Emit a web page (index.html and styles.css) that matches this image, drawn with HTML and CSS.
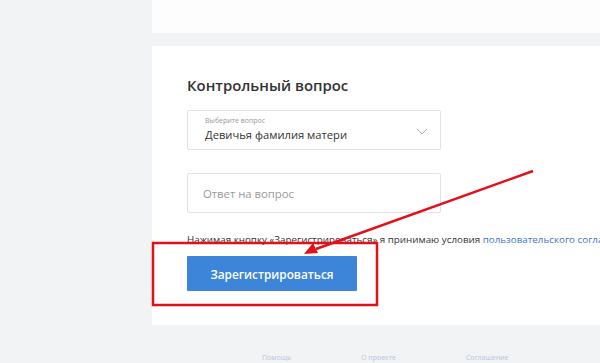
FILE: index.html
```html
<!DOCTYPE html>
<html lang="ru">
<head>
  <meta charset="UTF-8">
  <meta name="viewport" content="width=device-width, initial-scale=1.0">
  <title>Регистрация</title>
  <link rel="stylesheet" href="styles.css">
</head>
<body>
  <div class="page">
    <div class="card card-top"></div>

    <div class="card card-form">
      <h2 class="section-title">Контрольный вопрос</h2>

      <div class="field select-field">
        <span class="field-label">Выберите вопрос</span>
        <span class="field-value">Девичья фамилия матери</span>
        <svg class="chevron" width="12" height="7" viewBox="0 0 12 7">
          <path d="M1 1 L6 6 L11 1" fill="none" stroke="#b5b5b5" stroke-width="1"/>
        </svg>
      </div>

      <div class="field input-field">
        <span class="placeholder">Ответ на вопрос</span>
      </div>

      <p class="agreement">Нажимая кнопку «Зарегистрироваться» я принимаю условия <a href="#">пользовательского соглашения</a></p>

      <button class="btn-primary">Зарегистрироваться</button>
    </div>

    <div class="footer">
      <a href="#">Помощь</a>
      <a href="#">О проекте</a>
      <a href="#">Соглашение</a>
    </div>

    <!-- annotation drawn over the screenshot -->
    <svg class="annotation" width="600" height="363" viewBox="0 0 600 363">
      <rect x="153" y="243" width="224" height="62" fill="none" stroke="#e3101a" stroke-width="2.5"/>
      <line x1="533" y1="171" x2="316" y2="249" stroke="#e3101a" stroke-width="2.5"/>
      <path d="M304 254 L313 243 L318 253 Z" fill="#e3101a"/>
    </svg>
  </div>
</body>
</html>
```

FILE: styles.css
```css
html, body {
  margin: 0;
  padding: 0;
}
body {
  font-family: "Open Sans", Arial, sans-serif;
  background-color: #f2f3f5;
  color: #333;
  width: 600px;
  height: 363px;
  overflow: hidden;
}
.page {
  position: relative;
  height: 363px;
  padding-left: 152px;
}
.card {
  background-color: #fff;
}
.card-top {
  height: 33px;
  margin-bottom: 13px;
  background-color: #fdfdfd;
}
.card-form {
  height: 279px;
  padding: 28px 0 0 35px;
  overflow: hidden;
  box-sizing: border-box;
}
.section-title {
  margin: 0 0 14px;
  font-size: 14.9px;
  font-weight: 600;
  line-height: 22px;
  color: #333;
}
.field {
  width: 254px;
  height: 40px;
  box-sizing: border-box;
  border: 1px solid #e2e2e2;
  border-radius: 2px;
  position: relative;
}
.select-field {
  padding: 5px 0 0 17px;
}
.field-label {
  display: block;
  font-size: 7px;
  line-height: 9px;
  color: #999;
}
.field-value {
  display: block;
  font-size: 11.2px;
  line-height: 20px;
  color: #333;
}
.chevron {
  position: absolute;
  right: 12px;
  top: 17px;
}
.input-field {
  margin-top: 23px;
  padding: 7px 0 0 15px;
}
.placeholder {
  font-size: 11.3px;
  line-height: 20px;
  color: #9a9a9a;
}
.agreement {
  margin: 20px 0 0;
  font-size: 9.8px;
  line-height: 14px;
  white-space: nowrap;
  color: #333;
}
.agreement a {
  color: #3d75c9;
  text-decoration: none;
}
.btn-primary {
  margin-top: 9px;
  width: 170px;
  height: 35px;
  border: none;
  border-radius: 1px;
  background-color: #3c85d9;
  color: #fff;
  font-family: "Open Sans", Arial, sans-serif;
  font-size: 11.8px;
  font-weight: 600;
  cursor: pointer;
}
.footer {
  display: flex;
  gap: 70px;
  padding: 28px 0 0 110px;
  font-size: 7px;
  line-height: 9px;
}
.footer a {
  color: #b4c6df;
  text-decoration: none;
}
.annotation {
  position: absolute;
  left: 0;
  top: 0;
  pointer-events: none;
}
```
